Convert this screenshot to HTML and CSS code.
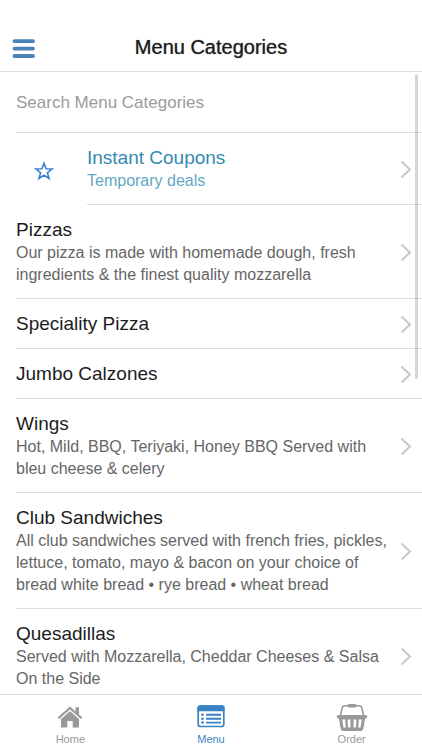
FILE: index.html
```html
<!DOCTYPE html>
<html lang="en">
<head>
<meta charset="utf-8">
<meta name="viewport" content="width=device-width, initial-scale=1">
<title>Menu Categories</title>
<link rel="stylesheet" href="styles.css">
</head>
<body>
<svg class="defs" aria-hidden="true">
  <symbol id="chevron" viewBox="0 0 12 18"><path d="M1.500 1.500 10 9.500l-8.500 8" fill="none" stroke="currentColor" stroke-width="2"/></symbol>
</svg>
<div class="app">
  <header class="header">
    <button class="menu-button" type="button" aria-label="Open navigation">
      <svg width="23" height="20" viewBox="0 0 23 20"><path d="M2.500 3.200h18.500M2.500 10.600h18.500M2.500 18h18.500" stroke="currentColor" stroke-width="3.800" stroke-linecap="round"/></svg>
    </button>
    <h1 class="title">Menu Categories</h1>
  </header>
  <main class="content">
    <div class="scroller">
      <div class="search"><input class="search-input" type="text" placeholder="Search Menu Categories" aria-label="Search Menu Categories"></div>
      <ul class="list">
        <li class="entry">
          <a class="row coupons" href="#coupons">
            <svg class="star" width="20" height="20" viewBox="0 0 20 20"><path d="m10 2.200 2.100 5.600 6 .2-4.700 3.700 1.700 5.800-5.100-3.400-5.100 3.400 1.700-5.800L1.900 8l6-.2z" fill="none" stroke="currentColor" stroke-width="1.600"/></svg>
            <span class="inner">
              <span class="text"><span class="name">Instant Coupons</span><span class="desc">Temporary deals</span></span>
              <svg class="chevron"><use href="#chevron"/></svg>
            </span>
          </a>
        </li>
        <li class="entry"><a class="row" href="#pizzas"><span class="inner"><span class="text"><span class="name">Pizzas</span><span class="desc">Our pizza is made with homemade dough, fresh ingredients &amp; the finest quality mozzarella</span></span><svg class="chevron"><use href="#chevron"/></svg></span></a></li>
        <li class="entry"><a class="row" href="#speciality"><span class="inner"><span class="text"><span class="name">Speciality Pizza</span></span><svg class="chevron"><use href="#chevron"/></svg></span></a></li>
        <li class="entry"><a class="row" href="#calzones"><span class="inner"><span class="text"><span class="name">Jumbo Calzones</span></span><svg class="chevron"><use href="#chevron"/></svg></span></a></li>
        <li class="entry"><a class="row" href="#wings"><span class="inner"><span class="text"><span class="name">Wings</span><span class="desc">Hot, Mild, BBQ, Teriyaki, Honey BBQ Served with bleu cheese &amp; celery</span></span><svg class="chevron"><use href="#chevron"/></svg></span></a></li>
        <li class="entry"><a class="row" href="#club"><span class="inner"><span class="text"><span class="name">Club Sandwiches</span><span class="desc">All club sandwiches served with french fries, pickles, lettuce, tomato, mayo &amp; bacon on your choice of bread white bread • rye bread • wheat bread</span></span><svg class="chevron"><use href="#chevron"/></svg></span></a></li>
        <li class="entry"><a class="row" href="#quesadillas"><span class="inner"><span class="text"><span class="name">Quesadillas</span><span class="desc">Served with Mozzarella, Cheddar Cheeses &amp; Salsa On the Side</span></span><svg class="chevron"><use href="#chevron"/></svg></span></a></li>
      </ul>
    </div>
    <div class="thumb"></div>
  </main>
  <nav class="tabs">
    <a class="tab" href="#home">
      <svg width="32" height="30" viewBox="0 0 32 30" fill="currentColor"><path d="M16 9.200 25 17v8.500h-6.300v-6.500h-5.400v6.500H7V17z"/><path d="M4.400 16.300 16 6l11.600 10.300" fill="none" stroke="currentColor" stroke-width="2.200"/><path d="M21.500 5.300H25v8l-3.500-3z"/></svg>
      <span>Home</span>
    </a>
    <a class="tab active" href="#menu" aria-current="page">
      <svg width="32" height="30" viewBox="0 0 32 30" fill="currentColor"><rect x="3.200" y="4" width="25.600" height="20.500" rx="2.500" fill="none" stroke="currentColor" stroke-width="1.700"/><path d="M2.400 9.200V6Q2.400 3.200 5.200 3.200h21.600q2.800 0 2.800 2.800v3.200z"/><path d="M11 12.800h15M11 16.700h15M11 20.600h15" stroke="currentColor" stroke-width="1.900"/><circle cx="7.500" cy="12.800" r="1.300"/><circle cx="7.500" cy="16.700" r="1.300"/><circle cx="7.500" cy="20.600" r="1.300"/></svg>
      <span>Menu</span>
    </a>
    <a class="tab" href="#order">
      <svg width="32" height="30" viewBox="0 0 32 30" fill="currentColor"><path d="M4.500 13.500 6 6.500Q6.600 3.800 9.300 3.800h13.400q2.700 0 3.300 2.700l1.500 7" fill="none" stroke="currentColor" stroke-width="1.500"/><rect x="11.500" y="2" width="9" height="3.600" rx="1.500"/><rect x=".8" y="13" width="30.400" height="3.400" rx="1.500"/><path fill-rule="evenodd" d="M2.700 15.500h26.600l-2 11q-.4 2.500-2.800 2.500h-17q-2.400 0-2.800-2.500zM6.300 17.500l1.100 8h2.400l-.7-8zM11.600 17.500l.5 8h2.400l-.2-8zM17.700 17.500l-.2 8h2.400l.5-8zM22.900 17.500l-.7 8h2.400l1.100-8z"/></svg>
      <span>Order</span>
    </a>
  </nav>
</div>
</body>
</html>
```
FILE: styles.css
```css
* { box-sizing: border-box; }

body {
  margin: 0;
  background: #fff;
  color: #1c1c1e;
  font-family: "Liberation Sans", Arial, sans-serif;
}

.defs { display: none; }

.app {
  display: flex;
  flex-direction: column;
  height: 100vh;
}

.header {
  display: grid;
  grid-template-columns: 48px 1fr 48px;
  align-items: center;
  padding-top: 24px;
  border-bottom: 1px solid #dcdcdc;
}

.menu-button {
  display: flex;
  padding: 0 0 0 12px;
  border: 0;
  background: none;
  color: #4a83b8;
}

.title {
  margin: 0;
  font-size: 20px;
  font-weight: 400;
  line-height: 47px;
  text-align: center;
  text-shadow: 0 0 1px rgba(28, 28, 30, 0.7);
}

.content {
  position: relative;
  flex: 1;
  min-height: 0;
}

.scroller {
  height: 100%;
  overflow-y: auto;
  scrollbar-width: none;
}

.thumb {
  position: absolute;
  top: 2px;
  right: 4px;
  width: 3px;
  height: 49%;
  border-radius: 2px;
  background: rgba(0, 0, 0, 0.16);
}

.search {
  margin-left: 16px;
  border-bottom: 1px solid #dedede;
}

.search-input {
  display: block;
  width: 100%;
  height: 60px;
  padding: 2px 0 0;
  border: 0;
  outline: 0;
  background: none;
  font: inherit;
  font-size: 17px;
}

.search-input::placeholder { color: #9b9b9b; }

.list {
  margin: 0;
  padding: 0;
  list-style: none;
}

.row {
  display: flex;
  align-items: center;
  padding-left: 16px;
  color: inherit;
  text-decoration: none;
}

.inner {
  display: flex;
  flex: 1;
  align-items: center;
  padding: 13px 10px 12px 0;
  border-bottom: 1px solid #dedede;
}

.text {
  flex: 1;
  padding-right: 12px;
}

.name,
.desc { display: block; }

.name {
  font-size: 19px;
  line-height: 24px;
}

.desc {
  color: #666;
  font-size: 16px;
  line-height: 22px;
}

.chevron {
  flex: none;
  width: 12px;
  height: 18px;
  color: #c8c8c8;
}

.star {
  flex: none;
  margin: 4px 33px 0 18px;
  color: #3a82cf;
}

.coupons .name { color: #348ab0; }
.coupons .desc { color: #62a7c6; }

.tabs {
  display: grid;
  grid-template-columns: repeat(3, 1fr);
  border-top: 1px solid #dedede;
  background: #fff;
}

.tab {
  display: flex;
  flex-direction: column;
  align-items: center;
  padding: 7px 0 4px;
  color: #999;
  font-size: 11px;
  line-height: 14px;
  text-decoration: none;
}

.active { color: #3b82c4; }
```
